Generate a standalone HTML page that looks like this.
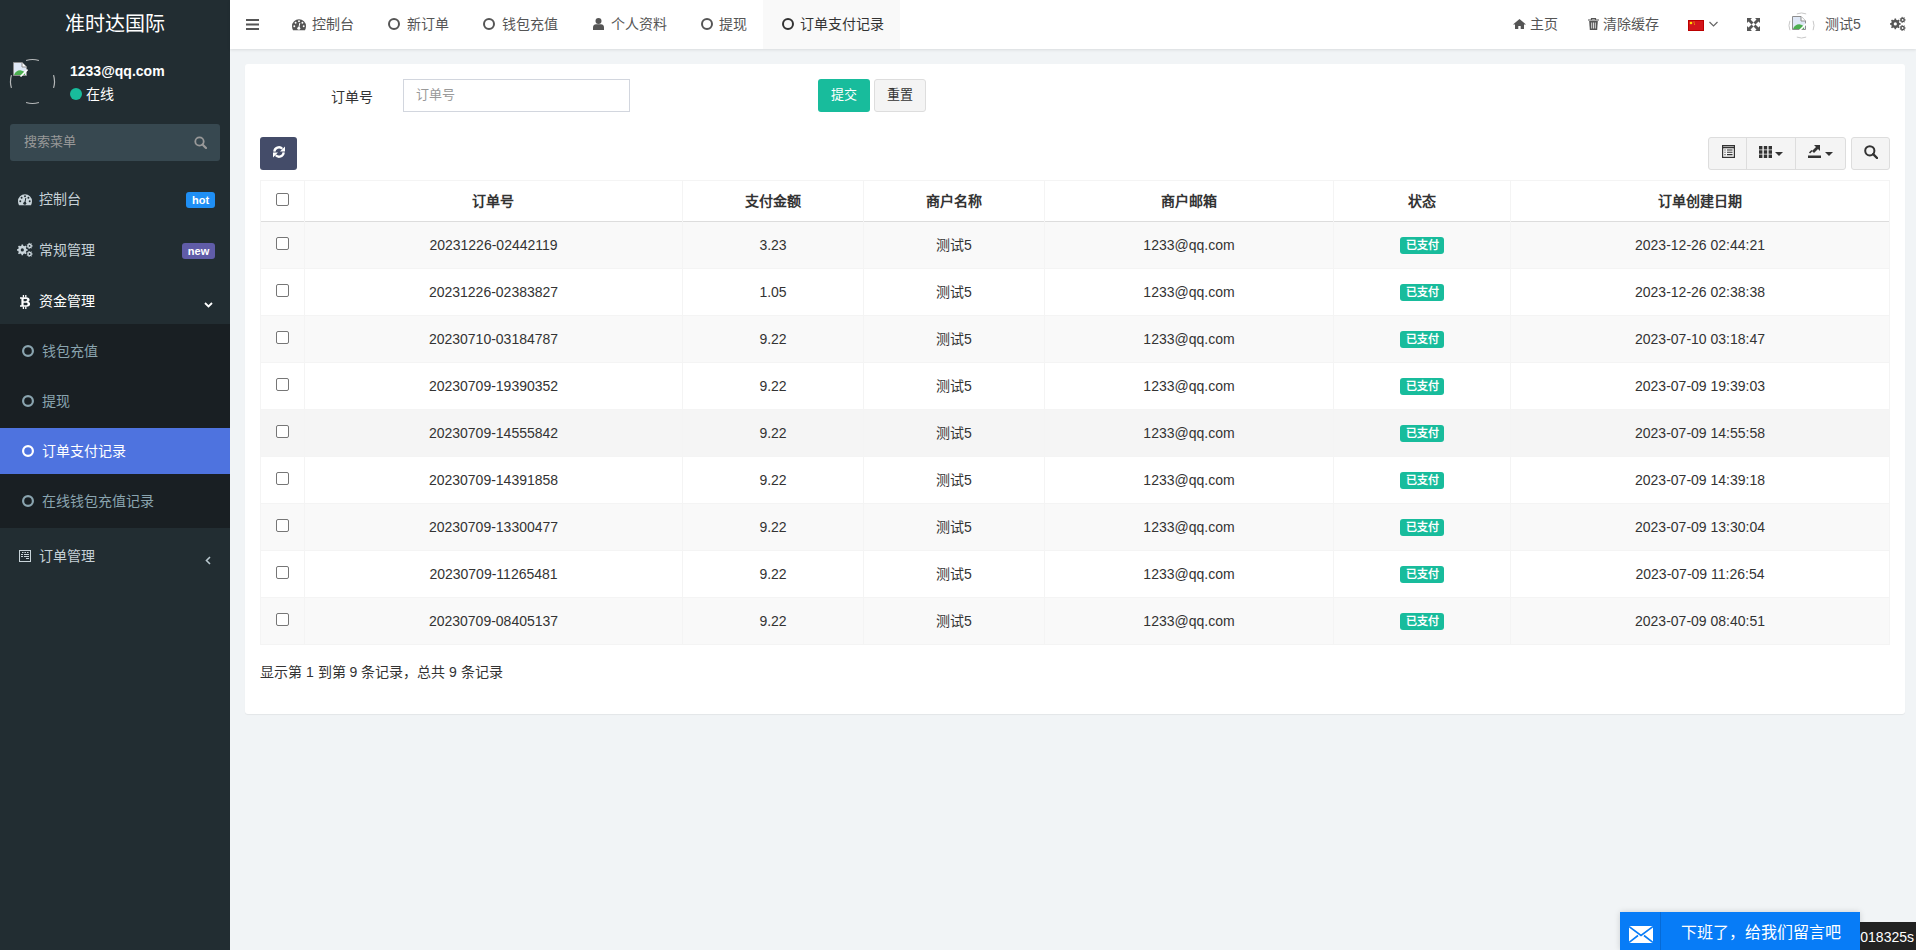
<!DOCTYPE html>
<html lang="zh-CN"><head><meta charset="utf-8">
<style>
*{box-sizing:border-box;margin:0;padding:0}
html,body{width:1916px;height:950px;overflow:hidden}
body{font-family:"Liberation Sans",sans-serif;font-size:14px;color:#333;background:#f1f4f6;position:relative}
.abs{position:absolute;display:block}
.t{position:absolute;white-space:nowrap;line-height:14px;font-size:14px}
#sidebar{position:absolute;left:0;top:0;width:230px;height:950px;background:#222d32}
#header{position:absolute;left:230px;top:0;width:1686px;height:49px;background:#fff;box-shadow:0 1px 3px rgba(0,0,0,.1)}
#panel{position:absolute;left:245px;top:64px;width:1660px;height:650px;background:#fff;border-radius:3px;box-shadow:0 1px 1px rgba(0,0,0,.06)}
.sub{position:absolute;left:0;top:324px;width:230px;height:204px;background:#191f23}
.hdr{color:#555}
.cb{position:absolute;width:13px;height:13px;border:1px solid #767676;border-radius:2px;background:#fff}
.lbl{position:absolute;width:44px;height:17px;background:#18bc9c;color:#fff;font-size:11px;font-weight:bold;text-align:center;line-height:17px;border-radius:3px}
.btn{position:absolute;border-radius:3px}
</style></head><body>

<div id="sidebar">
<div class="t" style="left:65px;top:14px;font-size:20px;line-height:20px;color:#fff">准时达国际</div>
<svg class="abs" style="left:0;top:50px" width="70" height="70"><path d="M53.54 25.07A22 22 0 0 1 53.54 37.93 M38.93 52.54A22 22 0 0 1 26.07 52.54 M11.46 37.93A22 22 0 0 1 11.46 25.07 M26.07 10.46A22 22 0 0 1 38.93 10.46" fill="none" stroke="rgba(220,220,220,.8)" stroke-width="1.2"/></svg>
<svg class="abs" style="left:12px;top:61px" width="16" height="16" viewBox="0 0 16 16"><path d="M1.5 14.5V1.5h8.5l4.5 4.5v8.5z" fill="#dfe8f6" stroke="#8e8e8e" stroke-width="1"/><path d="M10 1.5v4.5h4.5" fill="#fff" stroke="#8e8e8e" stroke-width="1"/><path d="M2 14c1.5-3.5 4-5 7-4.6 1.6.2 3 .9 4 1.8V14z" fill="#4caf50"/><path d="M8.5 15.5L15.5 8.5" stroke="#fff" stroke-width="1.6"/></svg>
<div class="t" style="left:70px;top:64px;color:#fff;font-weight:bold">1233@qq.com</div>
<svg class="abs" style="left:70px;top:88px" width="12" height="12"><circle cx="6" cy="6" r="6" fill="#18bc9c"/></svg>
<div class="t" style="left:86px;top:87px;color:#fff">在线</div>
<div class="abs" style="left:10px;top:124px;width:210px;height:37px;background:#374850;border-radius:3px"></div>
<div class="t" style="left:24px;top:135px;color:#999;font-size:13px;line-height:13px">搜索菜单</div>
<svg class="abs" style="left:194px;top:136px" width="13" height="13" viewBox="0 0 13 13"><circle cx="5.5" cy="5.5" r="4.2" fill="none" stroke="#999" stroke-width="1.8"/><path d="M8.5 8.5L12 12" stroke="#999" stroke-width="2.2" stroke-linecap="round"/></svg>
<svg class="abs" style="left:18px;top:194px" width="14" height="12" viewBox="0 0 14 12"><path d="M7 0.2A7 7 0 0 0 0 7.2c0 1.5.3 2.8 1 4h12c.7-1.2 1-2.5 1-4A7 7 0 0 0 7 0.2z" fill="#c9d4da"/><g fill="#222d32"><circle cx="7" cy="2.3" r=".95"/><circle cx="3.6" cy="3.8" r=".95"/><circle cx="10.4" cy="3.8" r=".95"/><circle cx="2.3" cy="7.3" r=".95"/><circle cx="11.7" cy="7.3" r=".95"/><circle cx="6.8" cy="9.2" r="1.5"/></g><path d="M6.8 9.2L7.8 4" stroke="#222d32" stroke-width="1"/></svg>
<div class="t" style="left:39px;top:192px;color:#c6d1d7">控制台</div>
<div class="abs" style="left:186px;top:192px;width:29px;height:16px;background:#1f8ff5;border-radius:3px;color:#fff;font-weight:bold;font-size:11px;line-height:16px;text-align:center">hot</div>
<svg class="abs" style="left:17px;top:242px" width="16" height="16" viewBox="0 0 16 16"><path d="M9.40 7.00 L10.65 7.16 L10.65 8.64 L9.40 8.80 L8.84 10.16 L9.61 11.16 L8.56 12.21 L7.56 11.44 L6.20 12.00 L6.04 13.25 L4.56 13.25 L4.40 12.00 L3.04 11.44 L2.04 12.21 L0.99 11.16 L1.76 10.16 L1.20 8.80 L-0.05 8.64 L-0.05 7.16 L1.20 7.00 L1.76 5.64 L0.99 4.64 L2.04 3.59 L3.04 4.36 L4.40 3.80 L4.56 2.55 L6.04 2.55 L6.20 3.80 L7.56 4.36 L8.56 3.59 L9.61 4.64 L8.84 5.64Z M6.90 7.90 A1.6 1.6 0 1 0 3.70 7.90 A1.6 1.6 0 1 0 6.90 7.90Z M14.83 3.34 L15.66 3.42 L15.66 4.38 L14.83 4.46 L14.43 5.29 L14.89 5.99 L14.13 6.60 L13.55 5.99 L12.65 6.20 L12.39 6.99 L11.45 6.78 L11.56 5.95 L10.83 5.37 L10.05 5.67 L9.63 4.79 L10.35 4.36 L10.35 3.44 L9.63 3.01 L10.05 2.13 L10.83 2.43 L11.56 1.85 L11.45 1.02 L12.39 0.81 L12.65 1.60 L13.55 1.81 L14.13 1.20 L14.89 1.81 L14.43 2.51Z M13.50 3.90 A0.9 0.9 0 1 0 11.70 3.90 A0.9 0.9 0 1 0 13.50 3.90Z M14.83 11.44 L15.66 11.52 L15.66 12.48 L14.83 12.56 L14.43 13.39 L14.89 14.09 L14.13 14.70 L13.55 14.09 L12.65 14.30 L12.39 15.09 L11.45 14.88 L11.56 14.05 L10.83 13.47 L10.05 13.77 L9.63 12.89 L10.35 12.46 L10.35 11.54 L9.63 11.11 L10.05 10.23 L10.83 10.53 L11.56 9.95 L11.45 9.12 L12.39 8.91 L12.65 9.70 L13.55 9.91 L14.13 9.30 L14.89 9.91 L14.43 10.61Z M13.50 12.00 A0.9 0.9 0 1 0 11.70 12.00 A0.9 0.9 0 1 0 13.50 12.00Z" fill="#c9d4da" fill-rule="evenodd"/></svg>
<div class="t" style="left:39px;top:243px;color:#c6d1d7">常规管理</div>
<div class="abs" style="left:182px;top:243px;width:33px;height:16px;background:#605ca8;border-radius:3px;color:#fff;font-weight:bold;font-size:11px;line-height:16px;text-align:center">new</div>
<svg class="abs" style="left:20px;top:295px" width="11" height="14" viewBox="0 0 11 14"><path d="M0 2.2h6.2c2.2 0 3.4 1 3.4 2.6 0 1-.6 1.7-1.4 2 1.1.3 1.9 1.1 1.9 2.3 0 1.8-1.3 2.7-3.5 2.7H0v-1.5h1.4V3.7H0z M3.6 3.9v2.4h2.2c.9 0 1.4-.4 1.4-1.2 0-.8-.5-1.2-1.4-1.2z M3.6 7.7v2.6h2.5c.9 0 1.5-.4 1.5-1.3S7 7.7 6.1 7.7z" fill="#fff" fill-rule="evenodd"/><path d="M3.4 0v2.5M5.8 0v2.5M3.4 11.5V14M5.8 11.5V14" stroke="#fff" stroke-width="1.3"/></svg>
<div class="t" style="left:39px;top:294px;color:#fff">资金管理</div>
<svg class="abs" style="left:204px;top:302px" width="9" height="6" viewBox="0 0 9 6"><path d="M1 1l3.5 3.5L8 1" fill="none" stroke="#fff" stroke-width="1.8"/></svg>
<div class="sub"></div>
<svg class="abs" style="left:22px;top:345px" width="12" height="12" viewBox="0 0 12 12"><circle cx="6.0" cy="6.0" r="4.9" fill="none" stroke="#8aa4af" stroke-width="2.2"/></svg>
<div class="t" style="left:42px;top:344px;color:#8aa4af">钱包充值</div>
<svg class="abs" style="left:22px;top:395px" width="12" height="12" viewBox="0 0 12 12"><circle cx="6.0" cy="6.0" r="4.9" fill="none" stroke="#8aa4af" stroke-width="2.2"/></svg>
<div class="t" style="left:42px;top:394px;color:#8aa4af">提现</div>
<div class="abs" style="left:0;top:428px;width:230px;height:46px;background:#4e73df"></div>
<svg class="abs" style="left:22px;top:445px" width="12" height="12" viewBox="0 0 12 12"><circle cx="6.0" cy="6.0" r="4.9" fill="none" stroke="#fff" stroke-width="2.2"/></svg>
<div class="t" style="left:42px;top:444px;color:#fff">订单支付记录</div>
<svg class="abs" style="left:22px;top:495px" width="12" height="12" viewBox="0 0 12 12"><circle cx="6.0" cy="6.0" r="4.9" fill="none" stroke="#8aa4af" stroke-width="2.2"/></svg>
<div class="t" style="left:42px;top:494px;color:#8aa4af">在线钱包充值记录</div>
<svg class="abs" style="left:19px;top:550px" width="12" height="12" viewBox="0 0 12 12"><rect x=".5" y=".5" width="11" height="11" fill="none" stroke="#c9d4da" stroke-width="1"/><path d="M3 2.5h1.5M5.5 2.5h1.5M8 2.5h1.5M2 4.5h2M5 4.5h5M2 6.5h2M5 6.5h5M7 8.5h3" stroke="#c9d4da" stroke-width="1"/></svg>
<div class="t" style="left:39px;top:549px;color:#c6d1d7">订单管理</div>
<svg class="abs" style="left:205px;top:556px" width="6" height="9" viewBox="0 0 6 9"><path d="M5 1L1.5 4.5 5 8" fill="none" stroke="#b8c7ce" stroke-width="1.6"/></svg>
</div>
<div id="header"></div>
<div class="abs" style="left:763px;top:0;width:137px;height:49px;background:#f9f9f9"></div>
<svg class="abs" style="left:246px;top:19px" width="13" height="11" viewBox="0 0 13 11"><path d="M0 1h13M0 5.5h13M0 10h13" stroke="#555" stroke-width="2"/></svg>
<svg class="abs" style="left:292px;top:19px" width="14" height="12" viewBox="0 0 14 12"><path d="M7 0.2A7 7 0 0 0 0 7.2c0 1.5.3 2.8 1 4h12c.7-1.2 1-2.5 1-4A7 7 0 0 0 7 0.2z" fill="#555"/><g fill="#fff"><circle cx="7" cy="2.3" r=".95"/><circle cx="3.6" cy="3.8" r=".95"/><circle cx="10.4" cy="3.8" r=".95"/><circle cx="2.3" cy="7.3" r=".95"/><circle cx="11.7" cy="7.3" r=".95"/><circle cx="6.8" cy="9.2" r="1.5"/></g><path d="M6.8 9.2L7.8 4" stroke="#fff" stroke-width="1"/></svg>
<div class="t hdr" style="left:312px;top:17px">控制台</div>
<svg class="abs" style="left:388px;top:18px" width="12" height="12" viewBox="0 0 12 12"><circle cx="6.0" cy="6.0" r="5.0" fill="none" stroke="#555" stroke-width="2"/></svg>
<div class="t hdr" style="left:407px;top:17px">新订单</div>
<svg class="abs" style="left:483px;top:18px" width="12" height="12" viewBox="0 0 12 12"><circle cx="6.0" cy="6.0" r="5.0" fill="none" stroke="#555" stroke-width="2"/></svg>
<div class="t hdr" style="left:502px;top:17px">钱包充值</div>
<svg class="abs" style="left:593px;top:18px" width="11" height="12" viewBox="0 0 11 12"><circle cx="5.5" cy="3" r="3" fill="#555"/><path d="M0 12V9.5C0 7.5 1.5 6.3 3 6.3h5c1.5 0 3 1.2 3 3.2V12z" fill="#555"/></svg>
<div class="t hdr" style="left:611px;top:17px">个人资料</div>
<svg class="abs" style="left:701px;top:18px" width="12" height="12" viewBox="0 0 12 12"><circle cx="6.0" cy="6.0" r="5.0" fill="none" stroke="#555" stroke-width="2"/></svg>
<div class="t hdr" style="left:719px;top:17px">提现</div>
<svg class="abs" style="left:782px;top:18px" width="12" height="12" viewBox="0 0 12 12"><circle cx="6.0" cy="6.0" r="5.0" fill="none" stroke="#333" stroke-width="2"/></svg>
<div class="t" style="left:800px;top:17px;color:#333">订单支付记录</div>
<svg class="abs" style="left:1513px;top:19px" width="13" height="10" viewBox="0 0 13 10"><path d="M6.5 0L0 5.5h2V10h3.3V7h2.4v3H11V5.5h2z" fill="#555"/></svg>
<div class="t hdr" style="left:1530px;top:17px">主页</div>
<svg class="abs" style="left:1588px;top:18px" width="11" height="12" viewBox="0 0 11 12"><path d="M0 2h11M3.5 2V.5h4V2" fill="none" stroke="#555" stroke-width="1.2"/><path d="M1.2 3h8.6l-.6 9H1.8z" fill="#555"/><path d="M3.7 4.5v6M5.5 4.5v6M7.3 4.5v6" stroke="#fff" stroke-width=".8"/></svg>
<div class="t hdr" style="left:1603px;top:17px">清除缓存</div>
<svg class="abs" style="left:1688px;top:20px" width="16" height="11" viewBox="0 0 16 11"><rect width="16" height="11" fill="#d4141b"/><rect x=".5" y=".5" width="15" height="10" fill="none" stroke="#b00" stroke-width="1"/><circle cx="3" cy="3" r="1.3" fill="#ffde00"/><circle cx="6" cy="2" r=".6" fill="#ffde00"/><circle cx="6.5" cy="4" r=".6" fill="#ffde00"/></svg>
<svg class="abs" style="left:1709px;top:21px" width="9" height="6" viewBox="0 0 9 6"><path d="M.5 1l4 4 4-4" fill="none" stroke="#666" stroke-width="1.2"/></svg>
<svg class="abs" style="left:1747px;top:18px" width="13" height="13" viewBox="0 0 13 13"><path d="M0 0h5L3.5 1.5 6.5 4.5 4.5 6.5 1.5 3.5 0 5zM13 0v5l-1.5-1.5-3 3-2-2 3-3L8 0zM0 13V8l1.5 1.5 3-3 2 2-3 3L5 13zM13 13H8l1.5-1.5-3-3 2-2 3 3L13 8z" fill="#555"/></svg>
<svg class="abs" style="left:1780px;top:4px" width="44" height="44"><path d="M33.09 16.82A12.5 12.5 0 0 1 33.09 26.18 M26.18 33.09A12.5 12.5 0 0 1 16.82 33.09 M9.91 26.18A12.5 12.5 0 0 1 9.91 16.82 M16.82 9.91A12.5 12.5 0 0 1 26.18 9.91" fill="none" stroke="#c8c8c8" stroke-width="1"/></svg>
<svg class="abs" style="left:1791px;top:15px" width="16" height="16" viewBox="0 0 16 16"><path d="M1.5 14.5V1.5h8.5l4.5 4.5v8.5z" fill="#dfe8f6" stroke="#8e8e8e" stroke-width="1"/><path d="M10 1.5v4.5h4.5" fill="#fff" stroke="#8e8e8e" stroke-width="1"/><path d="M2 14c1.5-3.5 4-5 7-4.6 1.6.2 3 .9 4 1.8V14z" fill="#4caf50"/><path d="M8.5 15.5L15.5 8.5" stroke="#fff" stroke-width="1.6"/></svg>
<div class="t hdr" style="left:1825px;top:17px">测试5</div>
<svg class="abs" style="left:1890px;top:16px" width="16" height="16" viewBox="0 0 16 16"><path d="M9.40 7.00 L10.65 7.16 L10.65 8.64 L9.40 8.80 L8.84 10.16 L9.61 11.16 L8.56 12.21 L7.56 11.44 L6.20 12.00 L6.04 13.25 L4.56 13.25 L4.40 12.00 L3.04 11.44 L2.04 12.21 L0.99 11.16 L1.76 10.16 L1.20 8.80 L-0.05 8.64 L-0.05 7.16 L1.20 7.00 L1.76 5.64 L0.99 4.64 L2.04 3.59 L3.04 4.36 L4.40 3.80 L4.56 2.55 L6.04 2.55 L6.20 3.80 L7.56 4.36 L8.56 3.59 L9.61 4.64 L8.84 5.64Z M6.90 7.90 A1.6 1.6 0 1 0 3.70 7.90 A1.6 1.6 0 1 0 6.90 7.90Z M14.83 3.34 L15.66 3.42 L15.66 4.38 L14.83 4.46 L14.43 5.29 L14.89 5.99 L14.13 6.60 L13.55 5.99 L12.65 6.20 L12.39 6.99 L11.45 6.78 L11.56 5.95 L10.83 5.37 L10.05 5.67 L9.63 4.79 L10.35 4.36 L10.35 3.44 L9.63 3.01 L10.05 2.13 L10.83 2.43 L11.56 1.85 L11.45 1.02 L12.39 0.81 L12.65 1.60 L13.55 1.81 L14.13 1.20 L14.89 1.81 L14.43 2.51Z M13.50 3.90 A0.9 0.9 0 1 0 11.70 3.90 A0.9 0.9 0 1 0 13.50 3.90Z M14.83 11.44 L15.66 11.52 L15.66 12.48 L14.83 12.56 L14.43 13.39 L14.89 14.09 L14.13 14.70 L13.55 14.09 L12.65 14.30 L12.39 15.09 L11.45 14.88 L11.56 14.05 L10.83 13.47 L10.05 13.77 L9.63 12.89 L10.35 12.46 L10.35 11.54 L9.63 11.11 L10.05 10.23 L10.83 10.53 L11.56 9.95 L11.45 9.12 L12.39 8.91 L12.65 9.70 L13.55 9.91 L14.13 9.30 L14.89 9.91 L14.43 10.61Z M13.50 12.00 A0.9 0.9 0 1 0 11.70 12.00 A0.9 0.9 0 1 0 13.50 12.00Z" fill="#555" fill-rule="evenodd"/></svg>
<div id="panel"></div>
<div class="t" style="left:331px;top:90px;color:#333">订单号</div>
<div class="abs" style="left:403px;top:79px;width:227px;height:33px;border:1px solid #d2d6de;background:#fff"></div>
<div class="t" style="left:416px;top:88px;color:#999;font-size:13px;line-height:13px">订单号</div>
<div class="btn" style="left:818px;top:79px;width:52px;height:33px;background:#18bc9c"></div>
<div class="t" style="left:831px;top:88px;color:#fff;font-size:13px;line-height:13px">提交</div>
<div class="btn" style="left:874px;top:79px;width:52px;height:33px;background:#f4f4f4;border:1px solid #ddd"></div>
<div class="t" style="left:887px;top:88px;color:#333;font-size:13px;line-height:13px">重置</div>
<div class="btn" style="left:260px;top:137px;width:37px;height:33px;background:#444c69"></div>
<svg class="abs" style="left:273px;top:146px" width="12" height="12" viewBox="0 0 12 12"><path d="M1.3 5.6A4.7 4.7 0 0 1 9.3 2.7" fill="none" stroke="#fff" stroke-width="2.3"/><path d="M12 0.6V5.6H7z" fill="#fff"/><path d="M10.7 6.4A4.7 4.7 0 0 1 2.7 9.3" fill="none" stroke="#fff" stroke-width="2.3"/><path d="M0 11.4V6.4H5z" fill="#fff"/></svg>
<div class="btn" style="left:1708px;top:137px;width:138px;height:33px;background:#f4f4f4;border:1px solid #ddd"></div>
<div class="abs" style="left:1746px;top:137px;width:1px;height:33px;background:#ddd"></div>
<div class="abs" style="left:1795px;top:137px;width:1px;height:33px;background:#ddd"></div>
<div class="btn" style="left:1851px;top:137px;width:39px;height:33px;background:#f4f4f4;border:1px solid #ddd"></div>
<svg class="abs" style="left:1722px;top:145px" width="13" height="13" viewBox="0 0 13 13"><rect x=".6" y=".6" width="11.8" height="11.8" fill="none" stroke="#333" stroke-width="1.2"/><path d="M0 2.5h13" stroke="#333" stroke-width="1.5"/><path d="M2.5 5h1M5 5h5.5M2.5 7.3h1M5 7.3h5.5M2.5 9.6h1M5 9.6h5.5" stroke="#333" stroke-width="1.1"/></svg>
<svg class="abs" style="left:1759px;top:146px" width="13" height="12" viewBox="0 0 13 12"><path d="M0 0h3.4v3.4H0zM4.8 0h3.4v3.4H4.8zM9.6 0H13v3.4H9.6zM0 4.3h3.4v3.4H0zM4.8 4.3h3.4v3.4H4.8zM9.6 4.3H13v3.4H9.6zM0 8.6h3.4V12H0zM4.8 8.6h3.4V12H4.8zM9.6 8.6H13V12H9.6z" fill="#333"/></svg>
<svg class="abs" style="left:1775px;top:152px" width="8" height="4" viewBox="0 0 8 4"><path d="M0 0h8L4 4z" fill="#333"/></svg>
<svg class="abs" style="left:1808px;top:145px" width="13" height="13" viewBox="0 0 13 13"><path d="M0 10.5h13V13H0z" fill="#333"/><path d="M6 0h6v6l-2-2-4 4-2-2 4-4z" fill="#333"/><path d="M1.5 8L4 5.5" stroke="#333" stroke-width="1.6"/></svg>
<svg class="abs" style="left:1825px;top:152px" width="8" height="4" viewBox="0 0 8 4"><path d="M0 0h8L4 4z" fill="#333"/></svg>
<svg class="abs" style="left:1864px;top:145px" width="14" height="14" viewBox="0 0 14 14"><circle cx="5.8" cy="5.8" r="4.6" fill="none" stroke="#333" stroke-width="2"/><path d="M9.2 9.2L13 13" stroke="#333" stroke-width="2.4" stroke-linecap="round"/></svg>
<div class="abs" style="left:260px;top:180px;width:1630px;height:465px;border:1px solid #f4f4f4;background:#fff"></div>
<div class="abs" style="left:261px;top:222px;width:1628px;height:46px;background:#f9f9f9"></div>
<div class="abs" style="left:261px;top:268px;width:1628px;height:1px;background:#f4f4f4"></div>
<div class="abs" style="left:261px;top:269px;width:1628px;height:46px;background:#fff"></div>
<div class="abs" style="left:261px;top:315px;width:1628px;height:1px;background:#f4f4f4"></div>
<div class="abs" style="left:261px;top:316px;width:1628px;height:46px;background:#f9f9f9"></div>
<div class="abs" style="left:261px;top:362px;width:1628px;height:1px;background:#f4f4f4"></div>
<div class="abs" style="left:261px;top:363px;width:1628px;height:46px;background:#fff"></div>
<div class="abs" style="left:261px;top:409px;width:1628px;height:1px;background:#f4f4f4"></div>
<div class="abs" style="left:261px;top:410px;width:1628px;height:46px;background:#f5f5f5"></div>
<div class="abs" style="left:261px;top:456px;width:1628px;height:1px;background:#f4f4f4"></div>
<div class="abs" style="left:261px;top:457px;width:1628px;height:46px;background:#fff"></div>
<div class="abs" style="left:261px;top:503px;width:1628px;height:1px;background:#f4f4f4"></div>
<div class="abs" style="left:261px;top:504px;width:1628px;height:46px;background:#f9f9f9"></div>
<div class="abs" style="left:261px;top:550px;width:1628px;height:1px;background:#f4f4f4"></div>
<div class="abs" style="left:261px;top:551px;width:1628px;height:46px;background:#fff"></div>
<div class="abs" style="left:261px;top:597px;width:1628px;height:1px;background:#f4f4f4"></div>
<div class="abs" style="left:261px;top:598px;width:1628px;height:46px;background:#f9f9f9"></div>
<div class="abs" style="left:261px;top:644px;width:1628px;height:1px;background:#f4f4f4"></div>
<div class="abs" style="left:261px;top:221px;width:1628px;height:1px;background:#ddd"></div>
<div class="abs" style="left:304px;top:181px;width:1px;height:463px;background:#f4f4f4"></div>
<div class="abs" style="left:682px;top:181px;width:1px;height:463px;background:#f4f4f4"></div>
<div class="abs" style="left:863px;top:181px;width:1px;height:463px;background:#f4f4f4"></div>
<div class="abs" style="left:1044px;top:181px;width:1px;height:463px;background:#f4f4f4"></div>
<div class="abs" style="left:1333px;top:181px;width:1px;height:463px;background:#f4f4f4"></div>
<div class="abs" style="left:1510px;top:181px;width:1px;height:463px;background:#f4f4f4"></div>
<div class="cb" style="left:276px;top:193px"></div>
<div class="t" style="left:304px;width:378px;text-align:center;top:194px;font-weight:bold">订单号</div>
<div class="t" style="left:682px;width:181px;text-align:center;top:194px;font-weight:bold">支付金额</div>
<div class="t" style="left:863px;width:181px;text-align:center;top:194px;font-weight:bold">商户名称</div>
<div class="t" style="left:1044px;width:289px;text-align:center;top:194px;font-weight:bold">商户邮箱</div>
<div class="t" style="left:1333px;width:177px;text-align:center;top:194px;font-weight:bold">状态</div>
<div class="t" style="left:1510px;width:379px;text-align:center;top:194px;font-weight:bold">订单创建日期</div>
<div class="cb" style="left:276px;top:237px"></div>
<div class="t" style="left:305px;width:377px;text-align:center;top:238px">20231226-02442119</div>
<div class="t" style="left:683px;width:180px;text-align:center;top:238px">3.23</div>
<div class="t" style="left:864px;width:180px;text-align:center;top:238px">测试5</div>
<div class="t" style="left:1045px;width:288px;text-align:center;top:238px">1233@qq.com</div>
<div class="lbl" style="left:1400px;top:237px">已支付</div>
<div class="t" style="left:1511px;width:378px;text-align:center;top:238px">2023-12-26 02:44:21</div>
<div class="cb" style="left:276px;top:284px"></div>
<div class="t" style="left:305px;width:377px;text-align:center;top:285px">20231226-02383827</div>
<div class="t" style="left:683px;width:180px;text-align:center;top:285px">1.05</div>
<div class="t" style="left:864px;width:180px;text-align:center;top:285px">测试5</div>
<div class="t" style="left:1045px;width:288px;text-align:center;top:285px">1233@qq.com</div>
<div class="lbl" style="left:1400px;top:284px">已支付</div>
<div class="t" style="left:1511px;width:378px;text-align:center;top:285px">2023-12-26 02:38:38</div>
<div class="cb" style="left:276px;top:331px"></div>
<div class="t" style="left:305px;width:377px;text-align:center;top:332px">20230710-03184787</div>
<div class="t" style="left:683px;width:180px;text-align:center;top:332px">9.22</div>
<div class="t" style="left:864px;width:180px;text-align:center;top:332px">测试5</div>
<div class="t" style="left:1045px;width:288px;text-align:center;top:332px">1233@qq.com</div>
<div class="lbl" style="left:1400px;top:331px">已支付</div>
<div class="t" style="left:1511px;width:378px;text-align:center;top:332px">2023-07-10 03:18:47</div>
<div class="cb" style="left:276px;top:378px"></div>
<div class="t" style="left:305px;width:377px;text-align:center;top:379px">20230709-19390352</div>
<div class="t" style="left:683px;width:180px;text-align:center;top:379px">9.22</div>
<div class="t" style="left:864px;width:180px;text-align:center;top:379px">测试5</div>
<div class="t" style="left:1045px;width:288px;text-align:center;top:379px">1233@qq.com</div>
<div class="lbl" style="left:1400px;top:378px">已支付</div>
<div class="t" style="left:1511px;width:378px;text-align:center;top:379px">2023-07-09 19:39:03</div>
<div class="cb" style="left:276px;top:425px"></div>
<div class="t" style="left:305px;width:377px;text-align:center;top:426px">20230709-14555842</div>
<div class="t" style="left:683px;width:180px;text-align:center;top:426px">9.22</div>
<div class="t" style="left:864px;width:180px;text-align:center;top:426px">测试5</div>
<div class="t" style="left:1045px;width:288px;text-align:center;top:426px">1233@qq.com</div>
<div class="lbl" style="left:1400px;top:425px">已支付</div>
<div class="t" style="left:1511px;width:378px;text-align:center;top:426px">2023-07-09 14:55:58</div>
<div class="cb" style="left:276px;top:472px"></div>
<div class="t" style="left:305px;width:377px;text-align:center;top:473px">20230709-14391858</div>
<div class="t" style="left:683px;width:180px;text-align:center;top:473px">9.22</div>
<div class="t" style="left:864px;width:180px;text-align:center;top:473px">测试5</div>
<div class="t" style="left:1045px;width:288px;text-align:center;top:473px">1233@qq.com</div>
<div class="lbl" style="left:1400px;top:472px">已支付</div>
<div class="t" style="left:1511px;width:378px;text-align:center;top:473px">2023-07-09 14:39:18</div>
<div class="cb" style="left:276px;top:519px"></div>
<div class="t" style="left:305px;width:377px;text-align:center;top:520px">20230709-13300477</div>
<div class="t" style="left:683px;width:180px;text-align:center;top:520px">9.22</div>
<div class="t" style="left:864px;width:180px;text-align:center;top:520px">测试5</div>
<div class="t" style="left:1045px;width:288px;text-align:center;top:520px">1233@qq.com</div>
<div class="lbl" style="left:1400px;top:519px">已支付</div>
<div class="t" style="left:1511px;width:378px;text-align:center;top:520px">2023-07-09 13:30:04</div>
<div class="cb" style="left:276px;top:566px"></div>
<div class="t" style="left:305px;width:377px;text-align:center;top:567px">20230709-11265481</div>
<div class="t" style="left:683px;width:180px;text-align:center;top:567px">9.22</div>
<div class="t" style="left:864px;width:180px;text-align:center;top:567px">测试5</div>
<div class="t" style="left:1045px;width:288px;text-align:center;top:567px">1233@qq.com</div>
<div class="lbl" style="left:1400px;top:566px">已支付</div>
<div class="t" style="left:1511px;width:378px;text-align:center;top:567px">2023-07-09 11:26:54</div>
<div class="cb" style="left:276px;top:613px"></div>
<div class="t" style="left:305px;width:377px;text-align:center;top:614px">20230709-08405137</div>
<div class="t" style="left:683px;width:180px;text-align:center;top:614px">9.22</div>
<div class="t" style="left:864px;width:180px;text-align:center;top:614px">测试5</div>
<div class="t" style="left:1045px;width:288px;text-align:center;top:614px">1233@qq.com</div>
<div class="lbl" style="left:1400px;top:613px">已支付</div>
<div class="t" style="left:1511px;width:378px;text-align:center;top:614px">2023-07-09 08:40:51</div>
<div class="t" style="left:260px;top:665px">显示第 1 到第 9 条记录，总共 9 条记录</div>
<div class="abs" style="left:1620px;top:912px;width:240px;height:38px;background:#077cf7;box-shadow:0 0 6px rgba(0,0,0,.15)"></div>
<div class="abs" style="left:1660px;top:912px;width:1px;height:38px;background:#066ad6"></div>
<svg class="abs" style="left:1629px;top:926px" width="24" height="17" viewBox="0 0 24 17"><path d="M0 0h24v17H0z" fill="#fff"/><path d="M0 .5l12 9 12-9M0 16.5l9-7M24 16.5l-9-7" fill="none" stroke="#077cf7" stroke-width="1.6"/></svg>
<div class="t" style="left:1681px;top:925px;color:#fff;font-size:16px;line-height:16px">下班了，给我们留言吧</div>
<div class="abs" style="left:1860px;top:922px;width:56px;height:28px;background:#222;overflow:hidden"><div class="t" style="right:2px;top:8px;color:#fff">018325s</div></div>
</body></html>
